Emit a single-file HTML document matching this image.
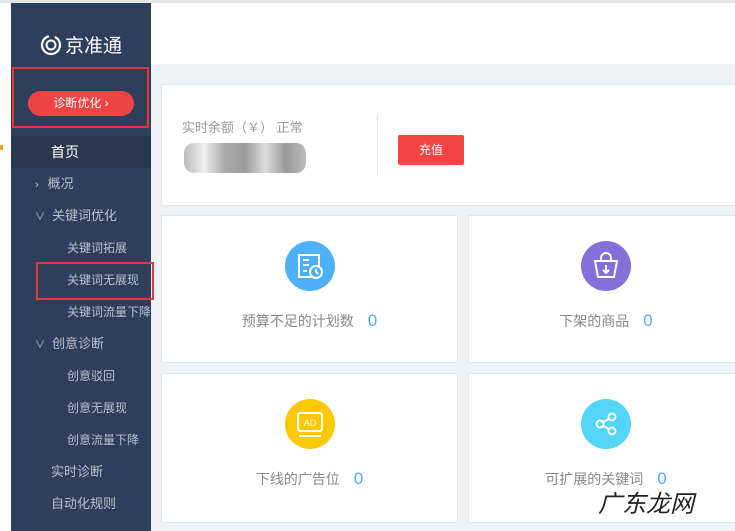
<!DOCTYPE html><html><head><meta charset="utf-8"><style>
*{margin:0;padding:0;box-sizing:border-box}
body{width:735px;height:531px;overflow:hidden;background:#fff;font-family:"Liberation Sans","Noto Sans CJK SC",sans-serif;position:relative}
.a{position:absolute}
.sb{left:11px;top:3px;width:140px;height:528px;background:#2e3f5c}
.mi{position:absolute;left:11px;width:140px;height:32px;line-height:32px;font-size:13px;color:#b8c0cc}
.card{position:absolute;background:#fff;border:1px solid #e2e5ea}
.ic{position:absolute;width:50px;height:50px;border-radius:50%;left:50%;margin-left:-25px;top:25px}
.lb{position:absolute;top:95px;left:0;width:100%;text-align:center;font-size:14px;color:#888}
.lb b{font-weight:normal;color:#55aaf5;font-size:17px;margin-left:14px}
</style></head><body>
<div class="a" style="left:0;top:0;width:735px;height:3px;background:#e6e6e6"></div>
<div class="a" style="left:151px;top:3px;width:584px;height:528px;background:#eff2f5"></div>
<div class="a" style="left:151px;top:3px;width:584px;height:61px;background:#fff"></div>
<div class="a" style="left:0;top:145px;width:3px;height:5px;background:#f39a2b"></div>
<div class="a sb"></div>
<div class="a" style="left:40px;top:31px;width:110px;color:#fff;font-size:19px;display:flex;align-items:center">
<svg width="22" height="22" viewBox="0 0 22 22"><circle cx="11" cy="11" r="9" fill="none" stroke="#fff" stroke-width="2.2" stroke-dasharray="40 6"/><circle cx="11" cy="11" r="4.5" fill="none" stroke="#fff" stroke-width="2"/></svg><span style="margin-left:3px">京准通</span></div>
<div class="a" style="left:12px;top:67px;width:137px;height:61px;border:2px solid #e53935"></div>
<div class="a" style="left:28px;top:91px;width:106px;height:25px;border-radius:13px;background:#f04444;color:#fff;font-size:12px;line-height:25px;text-align:center">诊断优化 ›</div>
<div class="mi" style="top:136px;background:#283850;color:#fff;padding-left:40px;font-size:14px">首页</div>
<div class="mi" style="top:168px;padding-left:24px"><span style="font-size:11px;margin-right:9px">›</span>概况</div>
<div class="mi" style="top:200px;padding-left:24px"><span style="font-size:10px;margin-right:7px">∨</span>关键词优化</div>
<div class="mi" style="top:232px;padding-left:56px;font-size:12px">关键词拓展</div>
<div class="mi" style="top:264px;padding-left:56px;font-size:12px">关键词无展现</div>
<div class="mi" style="top:296px;padding-left:56px;font-size:12px;white-space:nowrap;overflow:hidden">关键词流量下降</div>
<div class="mi" style="top:328px;padding-left:24px"><span style="font-size:10px;margin-right:7px">∨</span>创意诊断</div>
<div class="mi" style="top:360px;padding-left:56px;font-size:12px">创意驳回</div>
<div class="mi" style="top:392px;padding-left:56px;font-size:12px">创意无展现</div>
<div class="mi" style="top:424px;padding-left:56px;font-size:12px">创意流量下降</div>
<div class="mi" style="top:456px;padding-left:40px">实时诊断</div>
<div class="mi" style="top:488px;padding-left:40px">自动化规则</div>
<div class="a" style="left:36px;top:262px;width:118px;height:38px;border:2px solid #e53935"></div>
<div class="card" style="left:161px;top:84px;width:580px;height:122px">
<div class="a" style="left:20px;top:32px;font-size:13px;color:#999">实时余额（￥） 正常</div>
<div class="a" style="left:22px;top:58px;width:122px;height:30px;background:linear-gradient(90deg,#bbb,#eee,#aaa,#9a9a9a,#ddd,#999,#bbb);border-radius:10px"></div>
<div class="a" style="left:215px;top:30px;width:1px;height:60px;background:#e4e4e4"></div>
<div class="a" style="left:236px;top:50px;width:66px;height:30px;background:#f44444;border-radius:2px;color:#fff;font-size:12px;line-height:30px;text-align:center">充值</div>
</div>
<div class="card" style="left:161px;top:215px;width:297px;height:148px"><div class="ic" style="background:#4fb0fa"><svg width="50" height="50" viewBox="0 0 50 50" fill="none" stroke="#fff" stroke-width="2"><rect x="14" y="14" width="20" height="22"/><path d="M18 19h6M18 24h6M18 30h4"/><circle cx="31" cy="31" r="6" fill="#4fb0fa"/><path d="M31 28v3l2 2"/></svg></div><div class="lb">预算不足的计划数<b>0</b></div></div>
<div class="card" style="left:468px;top:215px;width:276px;height:148px"><div class="ic" style="background:#8470d8"><svg width="50" height="50" viewBox="0 0 50 50" fill="none" stroke="#fff" stroke-width="2"><path d="M20 20v-3a5 5 0 0 1 10 0v3"/><path d="M14 20h22l-3 16H17z"/><path d="M25 24v8M22 29l3 3 3-3"/></svg></div><div class="lb">下架的商品<b>0</b></div></div>
<div class="card" style="left:161px;top:373px;width:297px;height:150px"><div class="ic" style="background:#fcc800"><svg width="50" height="50" viewBox="0 0 50 50" fill="none" stroke="#fff" stroke-width="2"><rect x="13" y="14" width="24" height="18" rx="2"/><path d="M14 37h22"/><text x="25" y="27" font-size="9" fill="#fff" stroke="none" text-anchor="middle" font-family="Liberation Sans">AD</text></svg></div><div class="lb">下线的广告位<b>0</b></div></div>
<div class="card" style="left:468px;top:373px;width:276px;height:150px"><div class="ic" style="background:#52d4fb"><svg width="50" height="50" viewBox="0 0 50 50" fill="none" stroke="#fff" stroke-width="2"><circle cx="31" cy="18" r="3.5"/><circle cx="19" cy="25" r="3.5"/><circle cx="31" cy="32" r="3.5"/><path d="M22 23l6-3M22 27l6 3"/></svg></div><div class="lb">可扩展的关键词<b>0</b></div></div>
<div class="a" style="left:598px;top:484px;font-size:24px;color:#222;font-style:italic">广东龙网</div>
</body></html>
